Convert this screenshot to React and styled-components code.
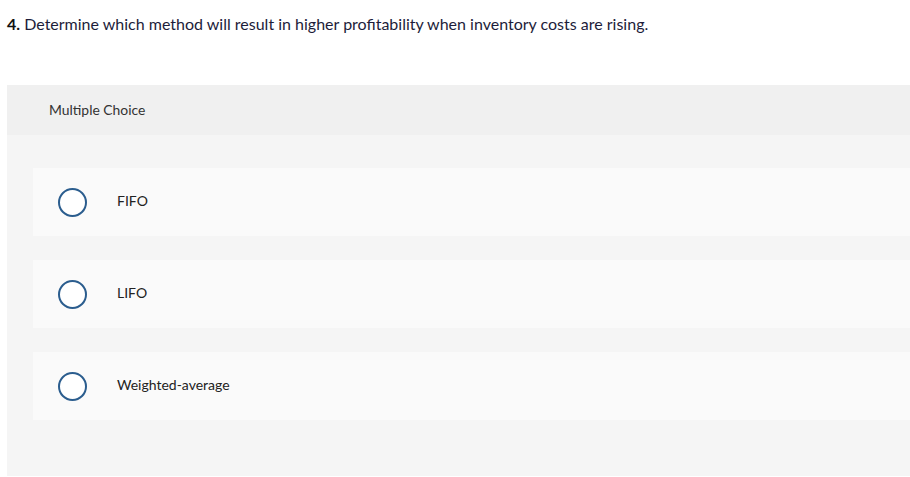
import React from "react";
import styled, { createGlobalStyle } from "styled-components";

const Global = createGlobalStyle`
  html, body { margin: 0; padding: 0; background: #ffffff; }
  body { font-family: Lato, "Open Sans", sans-serif; color: #222; }
`;

const Page = styled.div`
  padding: 14px 0 0 7px;
  width: 903px;
`;

const Question = styled.p`
  margin: 0;
  font-size: 16px;
  line-height: 19px;
  color: #1d1d3a;
  b { font-weight: 700; color: #111; }
`;

const Panel = styled.section`
  margin-top: 52px;
  background: #f5f5f5;
  height: 391px;
  display: flex;
  flex-direction: column;
`;

const Header = styled.div`
  background: #f0f0f0;
  height: 50px;
  display: flex;
  align-items: center;
  padding: 0 0 2px 42px;
  box-sizing: border-box;
  font-size: 13.9px;
  color: #333;
`;

const Options = styled.div`
  display: flex;
  flex-direction: column;
  gap: 24px;
  padding: 33px 0 0 26px;
`;

const Option = styled.label`
  height: 68px;
  background: #fafafa;
  display: flex;
  align-items: center;
  padding-left: 25px;
  font-size: 14px;
  color: #222;
  cursor: pointer;
`;

const Radio = styled.span`
  width: 25px;
  height: 25px;
  border: 2.5px solid #2b5d8e;
  border-radius: 50%;
  background: #fff;
  margin-right: 30px;
  flex-shrink: 0;
`;

const Text = styled.span`
  margin-bottom: 3px;
`;

const choices = ["FIFO", "LIFO", "Weighted-average"];

export default function App() {
  return (
    <>
      <Global />
      <Page>
        <Question>
          <b>4.</b> Determine which method will result in higher profitability when inventory costs are rising.
        </Question>
        <Panel>
          <Header>Multiple Choice</Header>
          <Options>
            {choices.map((c) => (
              <Option key={c}>
                <Radio />
                <Text>{c}</Text>
              </Option>
            ))}
          </Options>
        </Panel>
      </Page>
    </>
  );
}
